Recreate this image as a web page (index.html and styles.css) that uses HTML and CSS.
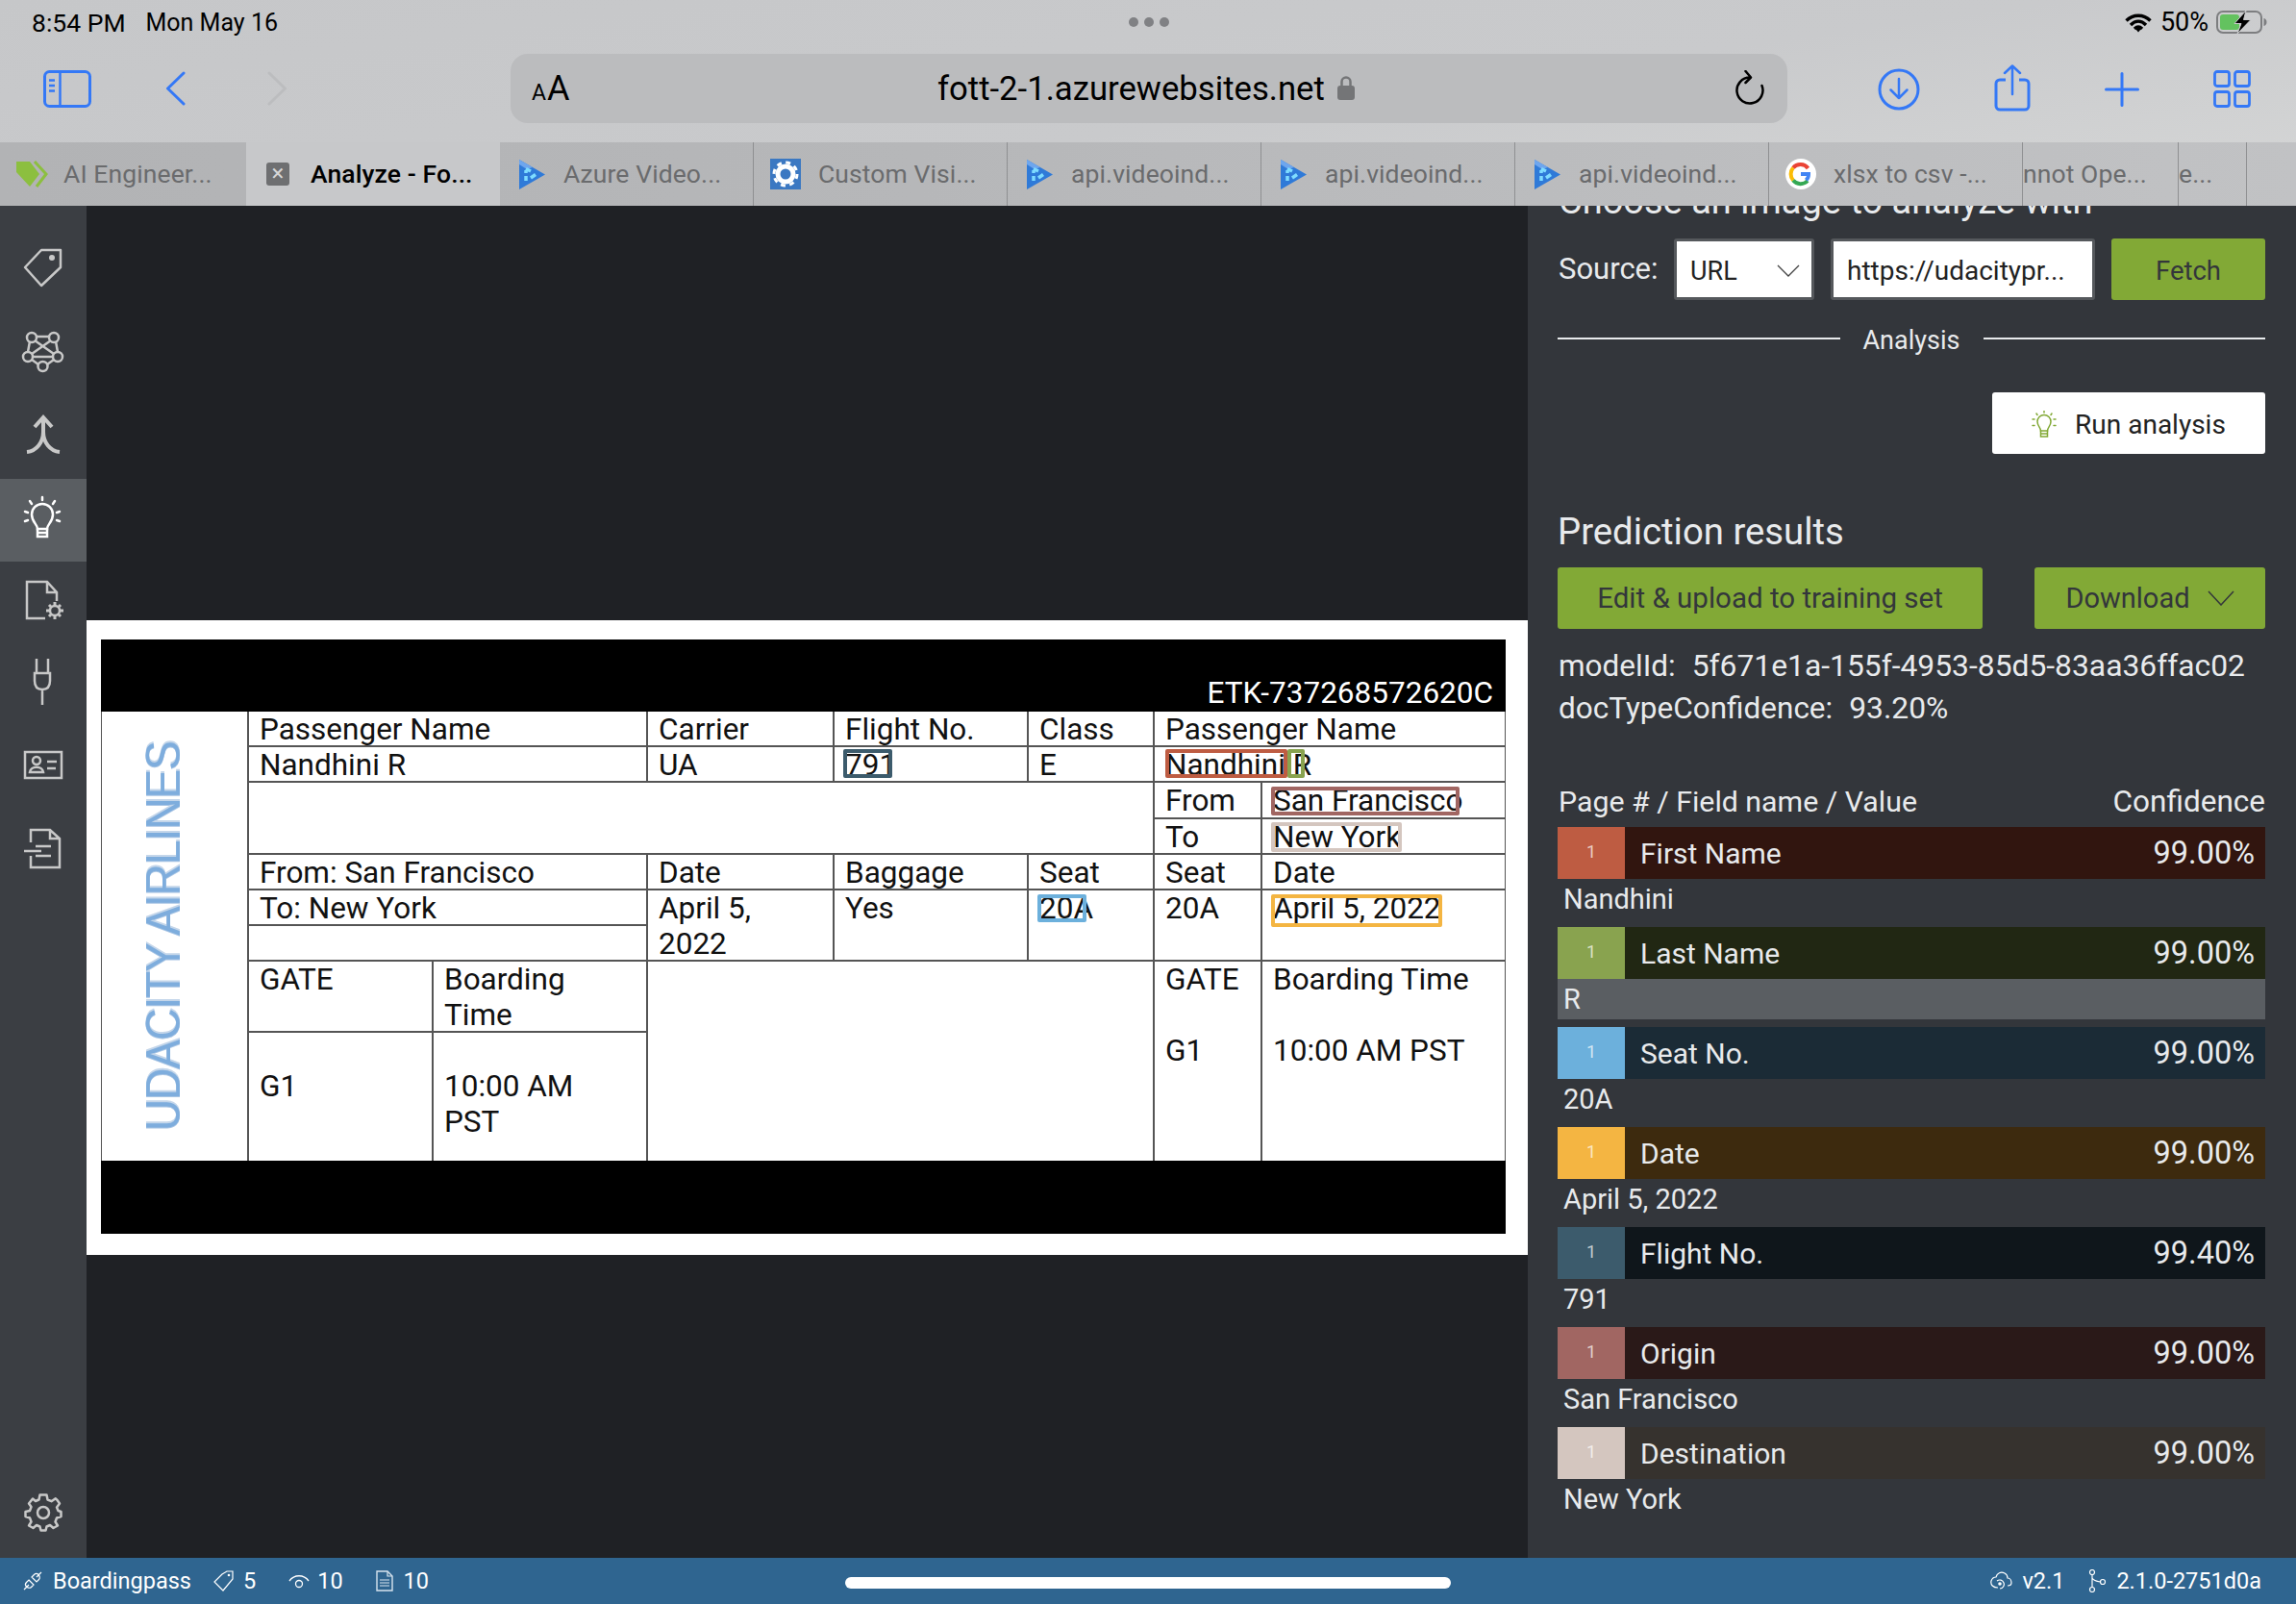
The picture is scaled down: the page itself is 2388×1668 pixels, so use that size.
FILE: index.html
```html
<!DOCTYPE html>
<html>
<head>
    <meta charset="UTF-8">
    <title>Analyze - Form OCR Testing Tool</title>
    <link rel="stylesheet" href="styles.css">
</head>
<body>
    <svg class="defs" width="0" height="0">
        <symbol id="azure" viewBox="0 0 27 31">
            <path d="M0 0L27 15.500L0 31Z" fill="#2f7ad8"/>
            <path d="M0 0L14 8L8 10L0 5Z" fill="#6ea6ee"/>
            <path d="M7 9.500L12 12M17 15.500L12 19M7 22V17M7 14V11" fill="none" stroke="#7fdcff" stroke-width="3.500"/>
        </symbol>
    </svg>

    <div class="browser">
        <div class="statusbar">
            <span class="clock">8:54 PM</span>
            <span class="today">Mon May 16</span>
            <span class="dots"><i></i><i></i><i></i></span>
            <svg class="wifi" width="28" height="20" viewBox="0 0 28 20"><path d="M1.500 7.500C8.500 .500 19.500 .500 26.500 7.500M6 12C11 7 17 7 22 12M10 16C12.500 13.600 15.500 13.600 18 16" fill="none" stroke="#000" stroke-width="3.400"/><path d="M11.500 16.500L14 14.500L16.500 16.500L14 19.500Z"/></svg>
            <span class="percent">50%</span>
            <svg class="battery" width="53" height="24" viewBox="0 0 53 24"><rect x="1" y="1" width="46" height="22" rx="6" fill="none" stroke="#7d7e80" stroke-width="2"/><rect x="4" y="4" width="20" height="16" rx="3" fill="#63c25f"/><path d="M49.500 8c2 .5 3 2 3 4s-1 3.500-3 4z" fill="#7d7e80"/><path d="M31 0L19 13.500H26L22 24L36 9.500H28.500Z" stroke="#c8c9cb" stroke-width="1"/></svg>
        </div>

        <div class="toolbar">
            <svg class="tool-sidebar" width="50" height="39" viewBox="0 0 50 39"><rect x="1.500" y="1.500" width="47" height="36" rx="5" fill="none" stroke="#3478f6" stroke-width="3"/><path d="M17.500 2V37M6 10.500H12M6 16H12M6 21.500H12" stroke="#3478f6" stroke-width="2.500"/></svg>
            <svg class="tool-back" width="21" height="36" viewBox="0 0 21 36"><path d="M19 2L2.500 18L19 34" fill="none" stroke="#3478f6" stroke-width="3" stroke-linecap="round" stroke-linejoin="round"/></svg>
            <svg class="tool-forward" width="21" height="36" viewBox="0 0 21 36"><path d="M2 2L18.500 18L2 34" fill="none" stroke="#bcbdbf" stroke-width="3" stroke-linecap="round" stroke-linejoin="round"/></svg>
            <div class="urlbar">
                <span class="aa"><small>A</small>A</span>
                <span class="address">fott-2-1.azurewebsites.net</span>
                <svg class="lock" width="18" height="26" viewBox="0 0 18 26"><path d="M4.500 12V7a4.500 4.500 0 0 1 9 0v5" fill="none" stroke="#747577" stroke-width="2.500"/><rect y="11" width="18" height="15" rx="3" fill="#747577"/></svg>
                <svg class="reload" width="32" height="36" viewBox="0 0 32 36"><path d="M16 7.500A13.500 13.500 0 1 0 28.500 16M11.500 1L17 7.500L11.500 13" fill="none" stroke="#000" stroke-width="2.500" stroke-linecap="round" stroke-linejoin="round"/></svg>
            </div>
            <svg class="tool-download" width="44" height="44" viewBox="0 0 44 44"><circle cx="22" cy="22" r="20" fill="none" stroke="#3478f6" stroke-width="3"/><path d="M22 11V31M13.500 22.500L22 31L30.500 22.500" fill="none" stroke="#3478f6" stroke-width="2.500" stroke-linecap="round" stroke-linejoin="round"/></svg>
            <svg class="tool-share" width="38" height="49" viewBox="0 0 38 49"><path d="M12 16H6a4 4 0 0 0-4 4V43a4 4 0 0 0 4 4H32a4 4 0 0 0 4-4V20a4 4 0 0 0-4-4H26" fill="none" stroke="#3478f6" stroke-width="3"/><path d="M19 31V3M11 9L19 1.500L27 9" fill="none" stroke="#3478f6" stroke-width="2.500" stroke-linecap="round" stroke-linejoin="round"/></svg>
            <svg class="tool-plus" width="36" height="36" viewBox="0 0 36 36"><path d="M18 1.500V34.500M1.500 18H34.500" stroke="#3478f6" stroke-width="3" stroke-linecap="round"/></svg>
            <svg class="tool-tabs" width="39" height="39" viewBox="0 0 39 39"><g fill="none" stroke="#3478f6" stroke-width="2.800"><rect x="1.500" y="1.500" width="15" height="15" rx="2.500"/><rect x="22.500" y="1.500" width="15" height="15" rx="2.500"/><rect x="1.500" y="22.500" width="15" height="15" rx="2.500"/><rect x="22.500" y="22.500" width="15" height="15" rx="2.500"/></g></svg>
        </div>

        <div class="tabs">
            <div class="tab tab-first">
                <svg class="fav" width="34" height="28" viewBox="0 0 34 28"><path d="M0 1H14L24 14L14 27L0 12Z" fill="#8cbf3f"/><path d="M19 1L31 14L21 27" fill="none" stroke="#8cbf3f" stroke-width="3"/></svg>
                <span>AI Engineer...</span>
            </div>
            <div class="tab tab-active">
                <span class="closebox">×</span>
                <span>Analyze - Fo...</span>
            </div>
            <div class="tab"><svg class="fav" width="27" height="31"><use href="#azure"/></svg><span>Azure Video...</span></div>
            <div class="tab tab-square">
                <svg class="fav" width="32" height="32" viewBox="0 0 32 32"><rect width="32" height="32" fill="#3b78c2"/><circle cx="16" cy="16" r="8" fill="none" stroke="#fff" stroke-width="5"/><circle cx="16" cy="16" r="12" fill="none" stroke="#fff" stroke-width="3" stroke-dasharray="5 4.400"/></svg>
                <span>Custom Visi...</span>
            </div>
            <div class="tab"><svg class="fav" width="27" height="31"><use href="#azure"/></svg><span>api.videoind...</span></div>
            <div class="tab"><svg class="fav" width="27" height="31"><use href="#azure"/></svg><span>api.videoind...</span></div>
            <div class="tab"><svg class="fav" width="27" height="31"><use href="#azure"/></svg><span>api.videoind...</span></div>
            <div class="tab tab-square">
                <svg class="fav" width="32" height="32" viewBox="0 0 32 32"><circle cx="16" cy="16" r="16" fill="#fff"/><path d="M23.500 10A10 10 0 0 0 8 9.500" fill="none" stroke="#ea4335" stroke-width="4"/><path d="M8 9.500A10 10 0 0 0 8 22.500" fill="none" stroke="#fbbc05" stroke-width="4"/><path d="M8 22.500A10 10 0 0 0 23 23" fill="none" stroke="#34a853" stroke-width="4"/><path d="M16 14H26V16C26 19 25 21.500 23 23.500L20 21C21 20 21.500 19 22 18H16Z" fill="#4285f4"/></svg>
                <span>xlsx to csv -...</span>
            </div>
            <div class="tab tab-wide"><span>nnot Ope...</span></div>
            <div class="tab tab-narrow"><span>e...</span></div>
            <div class="tab tab-last"></div>
        </div>
    </div>

    <div class="main">
        <div class="sidebar">
            <div class="side-item"><svg width="90" height="86" viewBox="0 0 90 86"><path d="M43 20H63V38L43 57L26 38Z" fill="none" stroke="#c8c8c8" stroke-width="2.500" stroke-linejoin="round"/><circle cx="54" cy="28" r="3" fill="#c8c8c8"/></svg></div>
            <div class="side-item"><svg width="90" height="86" viewBox="0 0 90 86"><g fill="none" stroke="#c8c8c8" stroke-width="2.500"><path d="M37 24H52M31 29L29 40M58 29L60 40M34 45H55M36 28L56 42M53 28L33 42M33 48L40 53M56 48L49 53"/><circle cx="33" cy="25" r="5"/><circle cx="56" cy="25" r="5"/><circle cx="29" cy="45" r="5"/><circle cx="60" cy="45" r="5"/><circle cx="44.500" cy="55" r="5"/></g></svg></div>
            <div class="side-item"><svg width="90" height="86" viewBox="0 0 90 86"><path d="M45 24V37C45 48 38 57 28 58M45 37C45 48 52 57 62 58M36 32L45 22L54 32" fill="none" stroke="#c8c8c8" stroke-width="4"/></svg></div>
            <div class="side-item side-active"><svg width="90" height="86" viewBox="0 0 90 86"><g transform="translate(0 3)" fill="none" stroke="#fff" stroke-width="2.500" stroke-linecap="round"><path d="M39 49C39 44 33 42 33 34A11 11 0 0 1 55 34C55 42 49 44 49 49Z"/><path d="M39 49V57H49V49M39 53H49M44 16V19M31 20L33 23M57 20L55 23M26 31L29 32M62 31L59 32M26 41L29 40M62 41L59 40"/></g></svg></div>
            <div class="side-item"><svg width="90" height="86" viewBox="0 0 90 86"><g transform="translate(0 1)" fill="none" stroke="#c8c8c8" stroke-width="2.500"><path d="M47 58H28V20H49L59 31V40M49 20V31H59"/><circle cx="57" cy="50" r="5"/><path d="M57 41V44M57 56V59M48 50H51M63 50H66M51 44L53 46M63 44L61 46M51 56L53 54M63 56L61 54" stroke-width="3"/></g></svg></div>
            <div class="side-item"><svg width="90" height="86" viewBox="0 0 90 86"><path transform="translate(0 3)" d="M38 12V27M50 12V27M36 27H52V35C52 41 49 44 44 44C39 44 36 41 36 35ZM44 44V60" fill="none" stroke="#c8c8c8" stroke-width="2.500"/></svg></div>
            <div class="side-item"><svg width="90" height="86" viewBox="0 0 90 86"><g transform="translate(0 -1)" fill="none" stroke="#c8c8c8" stroke-width="2.500"><rect x="26" y="27" width="38" height="27"/><circle cx="38" cy="36" r="4"/><path d="M31 48C32 41 44 41 45 48ZM49 37H59M49 44H58"/></g></svg></div>
            <div class="side-item"><svg width="90" height="86" viewBox="0 0 90 86"><path d="M32 34V21H52L62 30V60H32V48M52 21V30H62M25 43H43M37 38H53M37 48H53" fill="none" stroke="#c8c8c8" stroke-width="2.500"/></svg></div>
            <svg class="side-gear" width="40" height="40" viewBox="0 0 40 40"><g fill="none" stroke="#c8c8c8" stroke-width="2.500"><circle cx="20" cy="20" r="6"/><path d="M16.500 1.500H23.500L24.500 6.500L28.500 8.200L32.800 5.300L34.700 7.200L37 10.500L34 14.500L35.500 18L38.500 19V24L34 25.500L32.500 29.500L35 33.500L30.500 36L27 33L23.500 34.500L22.500 38.500H17.500L16.500 34.500L13 33L9.500 36L5 33.500L7.500 29.500L6 25.500L1.500 24V19L6 18L7.500 14L5 10.500L9 5.500L12 8L15.500 6.500Z" stroke-linejoin="round"/></g></svg>
        </div>

        <div class="canvas">
            <div class="page-image">
                <div class="ticket">
                    <div class="ticket-head">ETK-737268572620C</div>
                    <div class="ticket-grid">
                        <div class="cell r9 logo-cell"><span class="logo">UDACITY AIRLINES</span></div>
                        <div class="cell s2">Passenger Name</div>
                        <div class="cell">Carrier</div>
                        <div class="cell">Flight No.</div>
                        <div class="cell">Class</div>
                        <div class="cell s2 last">Passenger Name</div>
                        <div class="cell s2">Nandhini R</div>
                        <div class="cell">UA</div>
                        <div class="cell">791</div>
                        <div class="cell">E</div>
                        <div class="cell s2 last">Nandhini R</div>
                        <div class="cell s5 r2"></div>
                        <div class="cell">From</div>
                        <div class="cell last">San Francisco</div>
                        <div class="cell">To</div>
                        <div class="cell last">New York</div>
                        <div class="cell s2">From: San Francisco</div>
                        <div class="cell">Date</div>
                        <div class="cell">Baggage</div>
                        <div class="cell">Seat</div>
                        <div class="cell">Seat</div>
                        <div class="cell last">Date</div>
                        <div class="cell s2">To: New York</div>
                        <div class="cell r2">April 5,<br>2022</div>
                        <div class="cell r2">Yes</div>
                        <div class="cell r2">20A</div>
                        <div class="cell r2">20A</div>
                        <div class="cell r2 last">April 5, 2022</div>
                        <div class="cell s2"></div>
                        <div class="cell">GATE</div>
                        <div class="cell">Boarding<br>Time</div>
                        <div class="cell s3 r2 end"></div>
                        <div class="cell r2 end">GATE<br><br>G1</div>
                        <div class="cell r2 last end">Boarding Time<br><br>10:00 AM PST</div>
                        <div class="cell pad-gate end">G1</div>
                        <div class="cell pad-gate end">10:00 AM<br>PST</div>
                    </div>
                    <div class="ticket-foot"></div>

                    <span class="box box-first"></span>
                    <span class="box box-last"></span>
                    <span class="box box-flight"></span>
                    <span class="box box-origin"></span>
                    <span class="box box-dest"></span>
                    <span class="box box-seat"></span>
                    <span class="box box-date"></span>
                </div>
            </div>
        </div>

        <div class="panel">
            <h2 class="choose">Choose an image to analyze with</h2>
            <div class="source-row">
                <span class="source-label">Source:</span>
                <div class="select"><span>URL</span>
                    <svg width="24" height="13" viewBox="0 0 24 13"><path d="M1 1L12 12L23 1" fill="none" stroke="#444" stroke-width="1.300"/></svg>
                </div>
                <div class="input"><span>https://udacitypr...</span></div>
                <div class="btn btn-fetch"><span>Fetch</span></div>
            </div>
            <div class="divider"><i></i><span>Analysis</span><i></i></div>
            <div class="run-row">
                <div class="btn btn-run">
                    <svg width="26" height="29" viewBox="0 0 26 29"><g fill="none" stroke="#82a936" stroke-width="1.500" stroke-linecap="round"><path d="M9.500 21C9.500 17.500 6 16 6 11.500A7 7 0 0 1 20 11.500C20 16 16.500 17.500 16.500 21Z"/><path d="M9.500 21V27H16.500V21M9.500 24H16.500M13 .500V2M5 3L6 4.500M21 3L20 4.500M1 9H3M25 9H23M1 15.500H3M25 15.500H23"/></g></svg>
                    <span>Run analysis</span>
                </div>
            </div>
            <h2 class="results-title">Prediction results</h2>
            <div class="result-actions">
                <div class="btn btn-edit">Edit &amp; upload to training set</div>
                <div class="btn btn-download">Download
                    <svg width="28" height="16" viewBox="0 0 28 16"><path d="M1 1L14 15L27 1" fill="none" stroke="#33363b" stroke-width="1.500"/></svg>
                </div>
            </div>
            <div class="meta meta-first"><span class="meta-label">modelId:</span><span>5f671e1a-155f-4953-85d5-83aa36ffac02</span></div>
            <div class="meta"><span class="meta-label">docTypeConfidence:</span><span>93.20%</span></div>
            <div class="fields-head"><span>Page # / Field name / Value</span><span class="head-conf">Confidence</span></div>

            <div class="field">
                <div class="field-bar first"><span class="page">1</span><span class="name">First Name</span><span class="conf">99.00%</span></div>
                <div class="value">Nandhini</div>
            </div>
            <div class="field">
                <div class="field-bar lastname"><span class="page">1</span><span class="name">Last Name</span><span class="conf">99.00%</span></div>
                <div class="value value-hover">R</div>
            </div>
            <div class="field">
                <div class="field-bar seat"><span class="page">1</span><span class="name">Seat No.</span><span class="conf">99.00%</span></div>
                <div class="value">20A</div>
            </div>
            <div class="field">
                <div class="field-bar date"><span class="page">1</span><span class="name">Date</span><span class="conf">99.00%</span></div>
                <div class="value">April 5, 2022</div>
            </div>
            <div class="field">
                <div class="field-bar flight"><span class="page">1</span><span class="name">Flight No.</span><span class="conf">99.40%</span></div>
                <div class="value">791</div>
            </div>
            <div class="field">
                <div class="field-bar origin"><span class="page">1</span><span class="name">Origin</span><span class="conf">99.00%</span></div>
                <div class="value">San Francisco</div>
            </div>
            <div class="field">
                <div class="field-bar dest"><span class="page">1</span><span class="name">Destination</span><span class="conf">99.00%</span></div>
                <div class="value">New York</div>
            </div>
        </div>
    </div>

    <div class="footer">
        <svg class="foot-plug" width="20" height="20" viewBox="0 0 20 20"><path d="M1 19L6 14M14 6L19 1M6 9L11 14L8.500 16.500C7 18 4.500 17 3.500 16C2.500 15 2 13 3.500 11.500ZM9 6L14 11L16.500 8.500C18 7 17 4.500 16 3.500C15 2.500 13 2 11.500 3.500Z" fill="none" stroke="#fff" stroke-width="1.200"/></svg>
        <span class="foot-name">Boardingpass</span>
        <svg class="foot-tag" width="21" height="22" viewBox="0 0 21 22"><path d="M9 4L14 1H20V9L10 21L1 12Z" fill="none" stroke="#fff" stroke-width="1.200"/><circle cx="16" cy="5" r="1.300" fill="#fff"/></svg>
        <span class="foot-count">5</span>
        <svg class="foot-eye" width="22" height="16" viewBox="0 0 22 16"><path d="M1 8C6 1 16 1 21 8" fill="none" stroke="#fff" stroke-width="1.300"/><circle cx="11" cy="11" r="3.500" fill="none" stroke="#fff" stroke-width="1.300"/></svg>
        <span class="foot-count">10</span>
        <svg class="foot-doc" width="18" height="22" viewBox="0 0 18 22"><path d="M1 1H12L17 6V21H1Z" fill="none" stroke="#d8e4ee" stroke-width="1.400"/><path d="M12 1V6H17M4 10H14M4 13H14M4 16H14" fill="none" stroke="#d8e4ee" stroke-width="1.200"/></svg>
        <span class="foot-count">10</span>
        <span class="foot-gap"></span>
        <svg class="foot-cloud" width="23" height="20" viewBox="0 0 23 20"><path d="M8 17C3 17 0 14 1 10C2 7 4 6 6 6C7 2 11 0 15 2C17 3 18 5 18 7C21 7 22 10 22 12C22 14 20 15 18 15M7 10A4.500 4.500 0 1 1 10 18" fill="none" stroke="#fff" stroke-width="1.200"/><circle cx="10" cy="13" r="1.800" fill="#fff"/></svg>
        <span class="foot-version">v2.1</span>
        <svg class="foot-branch" width="19" height="24" viewBox="0 0 19 24"><g fill="none" stroke="#fff" stroke-width="1.200"><circle cx="4" cy="3" r="2.500"/><circle cx="4" cy="21" r="2.500"/><circle cx="15" cy="13" r="2.500"/><path d="M4 5.500V18.500M4 9C5 11 9 12.500 12.500 13"/></g></svg>
        <span>2.1.0-2751d0a</span>
        <span class="home-indicator"></span>
    </div>
</body>
</html>
```

FILE: styles.css
```css
html, body { margin: 0; padding: 0; }
body {
    width: 2388px; height: 1668px; overflow: hidden; position: relative;
    display: flex; flex-direction: column;
    font-family: Roboto, "Liberation Sans", sans-serif; color: #000;
}
.defs { position: absolute; }
svg { display: block; flex-shrink: 0; }

/* ipad safari chrome */
.browser {
    height: 214px; flex-shrink: 0;
    background: linear-gradient(172deg, #c6c7c9 0%, #c9cacc 55%, #d6d7d7 100%);
    display: flex; flex-direction: column;
}
.statusbar { height: 56px; display: flex; align-items: center; padding: 0 30px 10px 33px; font-size: 25px; box-sizing: border-box; }
.clock { font-size: 26.500px; }
.today { margin-left: 21px; }
.dots { display: flex; gap: 6px; margin-left: 885px; margin-right: auto; }
.dots i { width: 10px; height: 10px; border-radius: 50%; background: #808184; }
.percent { margin: 0 8px 0 9px; font-size: 27px; }
.wifi { margin-top: 2px; }

.toolbar { height: 92px; display: flex; align-items: flex-start; padding-left: 45px; }
.tool-sidebar { margin: 17px 77px 0 0; }
.tool-back { margin: 18px 85px 0 0; }
.tool-forward { margin: 18px 232px 0 0; }
.urlbar {
    width: 1328px; height: 72px; background: #bbbcbe; border-radius: 18px;
    display: flex; align-items: center; box-sizing: border-box; padding: 0 20px 0 22px; flex-shrink: 0;
}
.aa { font-size: 36px; width: 422px; line-height: 1; }
.aa small { font-size: 23px; margin-right: 1px; }
.address { font-size: 34.700px; width: 416px; white-space: nowrap; }
.lock { margin-top: -2px; margin-right: 395px; }
.reload { margin-top: -2px; }
.tool-download { margin: 15px 77px 0 94px; }
.tool-share { margin: 11px 77px 0 0; }
.tool-plus { margin: 19px 77px 0 0; }
.tool-tabs { margin-top: 17px; }

.tabs { height: 66px; display: flex; background: linear-gradient(90deg, #b2b3b5, #b6b7b9 40%, #c1c2c4); }
.tab {
    width: 264px; box-sizing: border-box; display: flex; align-items: center; flex-shrink: 0; overflow: hidden;
    padding: 0 0 2px 20px; border-right: 1px solid #8f9092; font-size: 26.500px; letter-spacing: .1px; color: #6a6b6d; white-space: nowrap;
}
.tab .fav { margin-right: 19px; margin-top: 2px; }
.tab-first { width: 256px; padding-left: 17px; border-right: none; }
.tab-first .fav { margin-right: 15px; }
.tab-active { background: #c7c8ca; color: #000; font-weight: 500; padding-left: 21px; border-right: none; }
.closebox { width: 24px; height: 24px; border-radius: 3px; background: #6e6f71; color: #d6d6d6; font-size: 24px; line-height: 23px; text-align: center; margin: 2px 22px 0 0; font-weight: 400; }
.tab-square { padding-left: 17px; }
.tab-square .fav { margin-right: 18px; }
.tab-wide { width: 162px; padding-left: 0; }
.tab-narrow { width: 71px; padding-left: 0; }
.tab-last { width: 52px; border-right: none; }

/* main area */
.main { flex: 1; display: flex; min-height: 0; }
.sidebar { width: 90px; flex-shrink: 0; background: #3b3e43; padding-top: 26px; box-sizing: border-box; display: flex; flex-direction: column; }
.side-item { height: 86px; }
.side-active { background: #5a5e62; }
.side-gear { margin: auto 0 27px 25px; }

.canvas { width: 1499px; flex-shrink: 0; background: #1f2125; padding-top: 431px; box-sizing: border-box; }
.page-image { background: #fff; height: 660px; box-sizing: border-box; padding: 20px 0 0 15px; }

.ticket { position: relative; width: 1461px; font-size: 31.500px; line-height: 37px; }
.ticket-head { height: 75px; background: #000; color: #fff; text-align: right; padding-right: 13px; box-sizing: border-box; padding-top: 37px; }
.ticket-foot { height: 76px; background: #000; }
.ticket-grid {
    display: grid; box-sizing: border-box; border-left: 1px solid #555; border-right: 1px solid #555;
    grid-template-columns: 153px 192px 223px 194px 202px 131px 112px 1fr;
    grid-template-rows: 37px 37px 38px 37px 37px 37px 37px 74px 133px;
}
.cell { border-right: 2px solid #555; border-bottom: 2px solid #555; padding: 0 0 0 11px; color: #111; box-sizing: border-box; white-space: nowrap; overflow: hidden; }
.s2 { grid-column: span 2; }
.s3 { grid-column: span 3; }
.s5 { grid-column: span 5; }
.r2 { grid-row: span 2; }
.r9 { grid-row: span 9; }
.last { border-right: none; }
.end { border-bottom: none; }
.pad-gate { padding-top: 37px; }
.logo-cell { display: flex; align-items: center; justify-content: center; padding: 0 26px 0 0; border-bottom: none; }
.logo {
    writing-mode: vertical-rl; transform: rotate(180deg) scaleX(1.100);
    font-family: "Liberation Sans", sans-serif; font-size: 46px; line-height: 46px; letter-spacing: -1px;
    color: #7eaddd; text-shadow: 2px 0 0 #c4d6ea, -1px 0 0 #a9c5e4;
}

.box { position: absolute; border: 4px solid; border-radius: 2px; box-sizing: border-box; }
.box-first { left: 1107px; top: 114px; width: 127px; height: 30px; border-color: #be5c42; }
.box-last { left: 1234px; top: 114px; width: 18px; height: 30px; border-color: #89a34f; }
.box-flight { left: 772px; top: 114px; width: 51px; height: 30px; border-color: #3c5b6c; }
.box-origin { left: 1217px; top: 153px; width: 196px; height: 30px; border-color: #a16662; }
.box-dest { left: 1217px; top: 190px; width: 136px; height: 31px; border-color: #d4c6bf; }
.box-seat { left: 974px; top: 265px; width: 51px; height: 29px; border-color: #6cb0dc; }
.box-date { left: 1217px; top: 265px; width: 178px; height: 34px; border-color: #f4b542; }

/* right panel */
.panel { flex: 1; background: #33363b; color: #e8eaec; overflow: hidden; padding: 0 32px 0 31px; font-size: 29px; }
.choose { margin: -25px 0 0 1px; font-size: 38px; font-weight: 400; line-height: 40px; white-space: nowrap; }
.source-row { display: flex; align-items: center; margin-top: 19px; height: 64px; }
.source-label { width: 121px; padding-left: 1px; box-sizing: border-box; margin-top: -2px; font-size: 31px; }
.select, .input {
    background: #fff; color: #222; border: 3px solid #55585c; border-radius: 3px; box-sizing: border-box; height: 64px;
    display: flex; align-items: center; padding-top: 3px;
}
.select { width: 146px; padding-left: 14px; justify-content: space-between; padding-right: 12px; font-size: 27px; }
.input { width: 275px; margin-left: 17px; padding-left: 14px; font-size: 28px; }
.btn { border-radius: 3px; box-sizing: border-box; height: 64px; display: flex; align-items: center; justify-content: center; color: #33363b; }
.btn-fetch { width: 160px; margin-left: 17px; background: #82a936; font-size: 27.500px; padding-top: 3px; }
.divider { display: flex; align-items: center; margin-top: 20px; height: 42px; font-size: 27px; }
.divider i { flex: 1; height: 2px; background: #e8eaec; margin-top: -2px; }
.divider span { margin: 2px 24px 0; }
.run-row { display: flex; justify-content: flex-end; margin-top: 34px; }
.btn-run { width: 284px; background: #fff; color: #222; gap: 19px; font-size: 28px; padding-top: 2px; }
.results-title { margin: 58px 0 0; font-size: 38.300px; font-weight: 400; line-height: 46px; }
.result-actions { display: flex; justify-content: space-between; margin-top: 14px; }
.btn-edit { width: 442px; background: #82a936; font-size: 29.500px; }
.btn-download { width: 240px; background: #82a936; gap: 18px; }
.meta { display: flex; gap: 17px; margin-left: 1px; height: 44px; align-items: center; font-size: 31.800px; }
.meta-label { font-size: 31.500px; }
.meta-first { margin-top: 16px; }
.fields-head { display: flex; justify-content: space-between; margin: 48px 0 0 1px; height: 54px; align-items: center; font-size: 30.300px; }
.head-conf { font-size: 31.500px; }
.field { margin-bottom: 8px; }
.field-bar { height: 54px; display: flex; align-items: center; font-size: 30px; color: #e8eaec; }
.page { width: 70px; align-self: stretch; display: flex; align-items: center; justify-content: center; font-size: 18px; padding-bottom: 4px; box-sizing: border-box; color: rgba(255, 255, 255, .7); }
.name { margin-left: 16px; }
.conf { margin-left: auto; margin-right: 11px; font-size: 32.500px; }
.value { height: 42px; line-height: 42px; padding-left: 6px; font-size: 29px; }
.value-hover { background: #5a5e62; }
.first { background: #31150f; } .first .page { background: #be5c42; }
.lastname { background: #212713; } .lastname .page { background: #89a34f; }
.seat { background: #1b2b36; } .seat .page { background: #6cb0dc; }
.date { background: #3d2a0e; } .date .page { background: #f4b542; }
.flight { background: #0f161b; } .flight .page { background: #3c5b6c; }
.origin { background: #2a1918; } .origin .page { background: #a16662; }
.dest { background: #36322e; } .dest .page { background: #d4c6bf; }

/* status bar */
.footer {
    height: 48px; flex-shrink: 0; background: #2f6590; color: #fff; position: relative;
    display: flex; align-items: center; font-size: 23.500px; padding: 0 36px 0 24px; box-sizing: border-box;
}
.foot-name { margin: 0 23px 0 11px; }
.foot-tag { margin-right: 10px; }
.foot-count { margin-right: 34px; }
.foot-eye { margin-right: 8px; }
.foot-doc { margin-right: 11px; }
.foot-gap { flex: 1; }
.foot-cloud { margin-right: 10px; }
.foot-version { margin-right: 25px; }
.foot-branch { margin-right: 10px; }
.home-indicator { position: absolute; left: 879px; top: 20px; width: 630px; height: 12px; border-radius: 6px; background: #fff; }
```
